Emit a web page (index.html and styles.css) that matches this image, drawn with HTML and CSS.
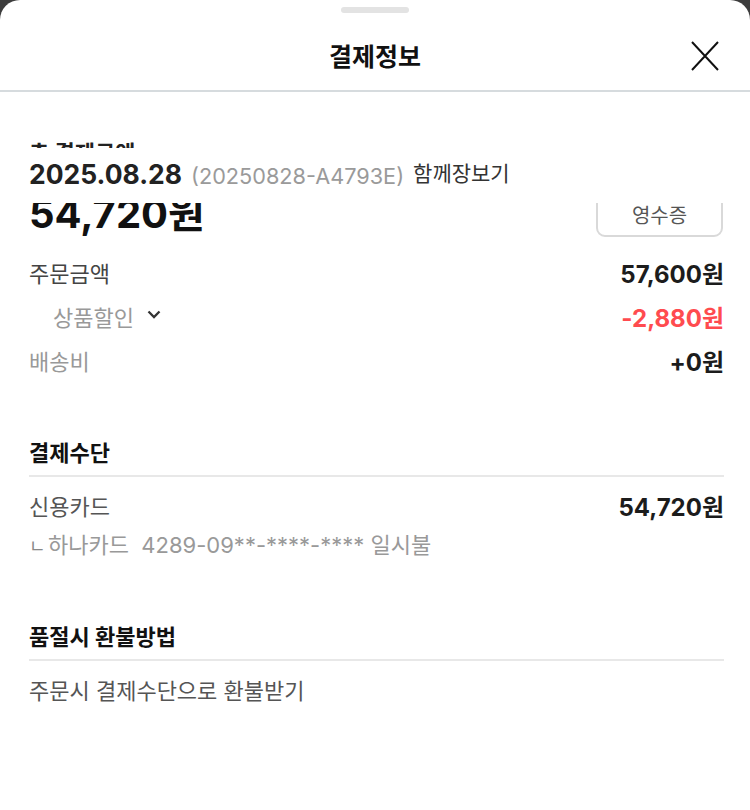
FILE: index.html
```html
<!DOCTYPE html>
<html>
<head>
  <title>결제정보</title>
  <link rel="stylesheet" href="styles.css">
</head>
<body>
  <div class="sheet">
    <div class="handle"></div>
    <div class="header">
      <h2>결제정보</h2>
      <button class="close" type="button" aria-label="닫기">
        <svg width="28" height="30" viewBox="0 0 28 30">
          <path d="M1 1 L27 29 M27 1 L1 29" stroke="#111" stroke-width="2" fill="none"/>
        </svg>
      </button>
    </div>

    <div class="content">
      <div class="order-bar">
        <span class="date">2025.08.28</span>
        <span class="order-no">(20250828-A4793E)</span>
        <span class="store">함께장보기</span>
      </div>

      <p class="total-label">총 결제금액</p>
      <div class="total-row">
        <span class="total">54,720원</span>
        <button class="receipt" type="button">영수증</button>
      </div>

      <div class="row">
        <span class="label">주문금액</span>
        <span class="value">57,600원</span>
      </div>
      <div class="row">
        <span class="label sub">상품할인
          <svg class="chev" width="14" height="9" viewBox="0 0 14 9">
            <path d="M1.5 1.5 L7 7 L12.5 1.5" stroke="#333" stroke-width="2.3" fill="none"/>
          </svg>
        </span>
        <span class="value red">-2,880원</span>
      </div>
      <div class="row">
        <span class="label light">배송비</span>
        <span class="value">+0원</span>
      </div>

      <div class="section">
        <h3>결제수단</h3>
        <div class="row small">
          <span class="label">신용카드</span>
          <span class="value">54,720원</span>
        </div>
        <div class="row small">
          <span class="label light"><span class="mark">ㄴ</span>하나카드&nbsp; 4289-09**-****-**** 일시불</span>
        </div>
      </div>

      <div class="section">
        <h3>품절시 환불방법</h3>
        <div class="row small">
          <span class="label">주문시 결제수단으로 환불받기</span>
        </div>
      </div>
    </div>
  </div>
</body>
</html>
```

FILE: styles.css
```css
body {
  margin: 0;
  background: #3d3d3d;
  font-family: Inter, "Noto Sans CJK KR", sans-serif;
  color: #222;
}
.sheet {
  background: white;
  border-radius: 20px 20px 0 0;
  min-height: 810px;
  overflow: hidden;
}
.handle {
  width: 68px;
  height: 6px;
  margin: 7px auto 0;
  border-radius: 3px;
  background: #e3e3e3;
}
.header {
  position: relative;
  height: 70px;
  margin-top: 7px;
  border-bottom: 2px solid #d6dbde;
  display: flex;
  align-items: center;
  justify-content: center;
}
.header h2 {
  margin: 0;
  font-size: 25px;
  font-weight: bold;
  color: #111;
}
.close {
  position: absolute;
  right: 31px;
  top: 21px;
  padding: 0;
  border: 0;
  background: none;
  display: flex;
}
.content {
  position: relative;
  padding: 46px 26px 40px 29px;
}
.order-bar {
  position: absolute;
  left: 0;
  right: 0;
  top: 56px;
  height: 55px;
  padding-left: 29px;
  background: white;
  display: flex;
  align-items: baseline;
  gap: 9px;
  line-height: 52px;
}
.date {
  font-size: 26.5px;
  font-weight: bold;
  color: #222;
}
.order-no {
  font-size: 21.7px;
  color: #9a9a9a;
}
.store {
  font-size: 21px;
  color: #333;
  position: relative;
  top: -3px;
}
.total-label {
  margin: 0;
  font-size: 22px;
  line-height: 30px;
  font-weight: bold;
}
.total-row {
  margin-top: 22px;
  height: 48px;
  display: flex;
  align-items: center;
  justify-content: space-between;
}
.total {
  font-size: 40px;
  font-weight: bold;
  line-height: 48px;
  color: #111;
}
.receipt {
  width: 127px;
  height: 46px;
  margin-right: 1px;
  border: 2px solid #d9d9d9;
  border-radius: 9px;
  background: white;
  font-family: inherit;
  font-size: 20px;
  color: #555;
}
.row {
  height: 44px;
  display: flex;
  align-items: center;
  justify-content: space-between;
  font-size: 22px;
}
.total-row + .row {
  margin-top: 12px;
}
.label {
  color: #444;
}
.label.light {
  color: #999;
}
.label.sub {
  color: #999;
  padding-left: 24px;
  display: flex;
  align-items: center;
  gap: 13px;
}
.chev {
  margin-top: -4px;
}
.value {
  font-size: 24px;
  font-weight: bold;
  color: #1c1c1c;
}
.value.red {
  color: #ff4b4f;
}
.section {
  margin-top: 55px;
}
.section + .section {
  margin-top: 59px;
}
.section h3 {
  margin: 0;
  font-size: 22px;
  line-height: 30px;
  font-weight: bold;
  color: #111;
  padding-top: 1px;
  padding-bottom: 7px;
  border-bottom: 2px solid #e8e8e8;
}
.section h3 + .row {
  margin-top: 9px;
}
.row.small {
  height: 38px;
}
.row.small .label {
  color: #555;
}
.row.small .label.light {
  color: #999;
}
.mark {
  display: inline-block;
  width: 19px;
  font-size: 18px;
  color: #888;
}
```
